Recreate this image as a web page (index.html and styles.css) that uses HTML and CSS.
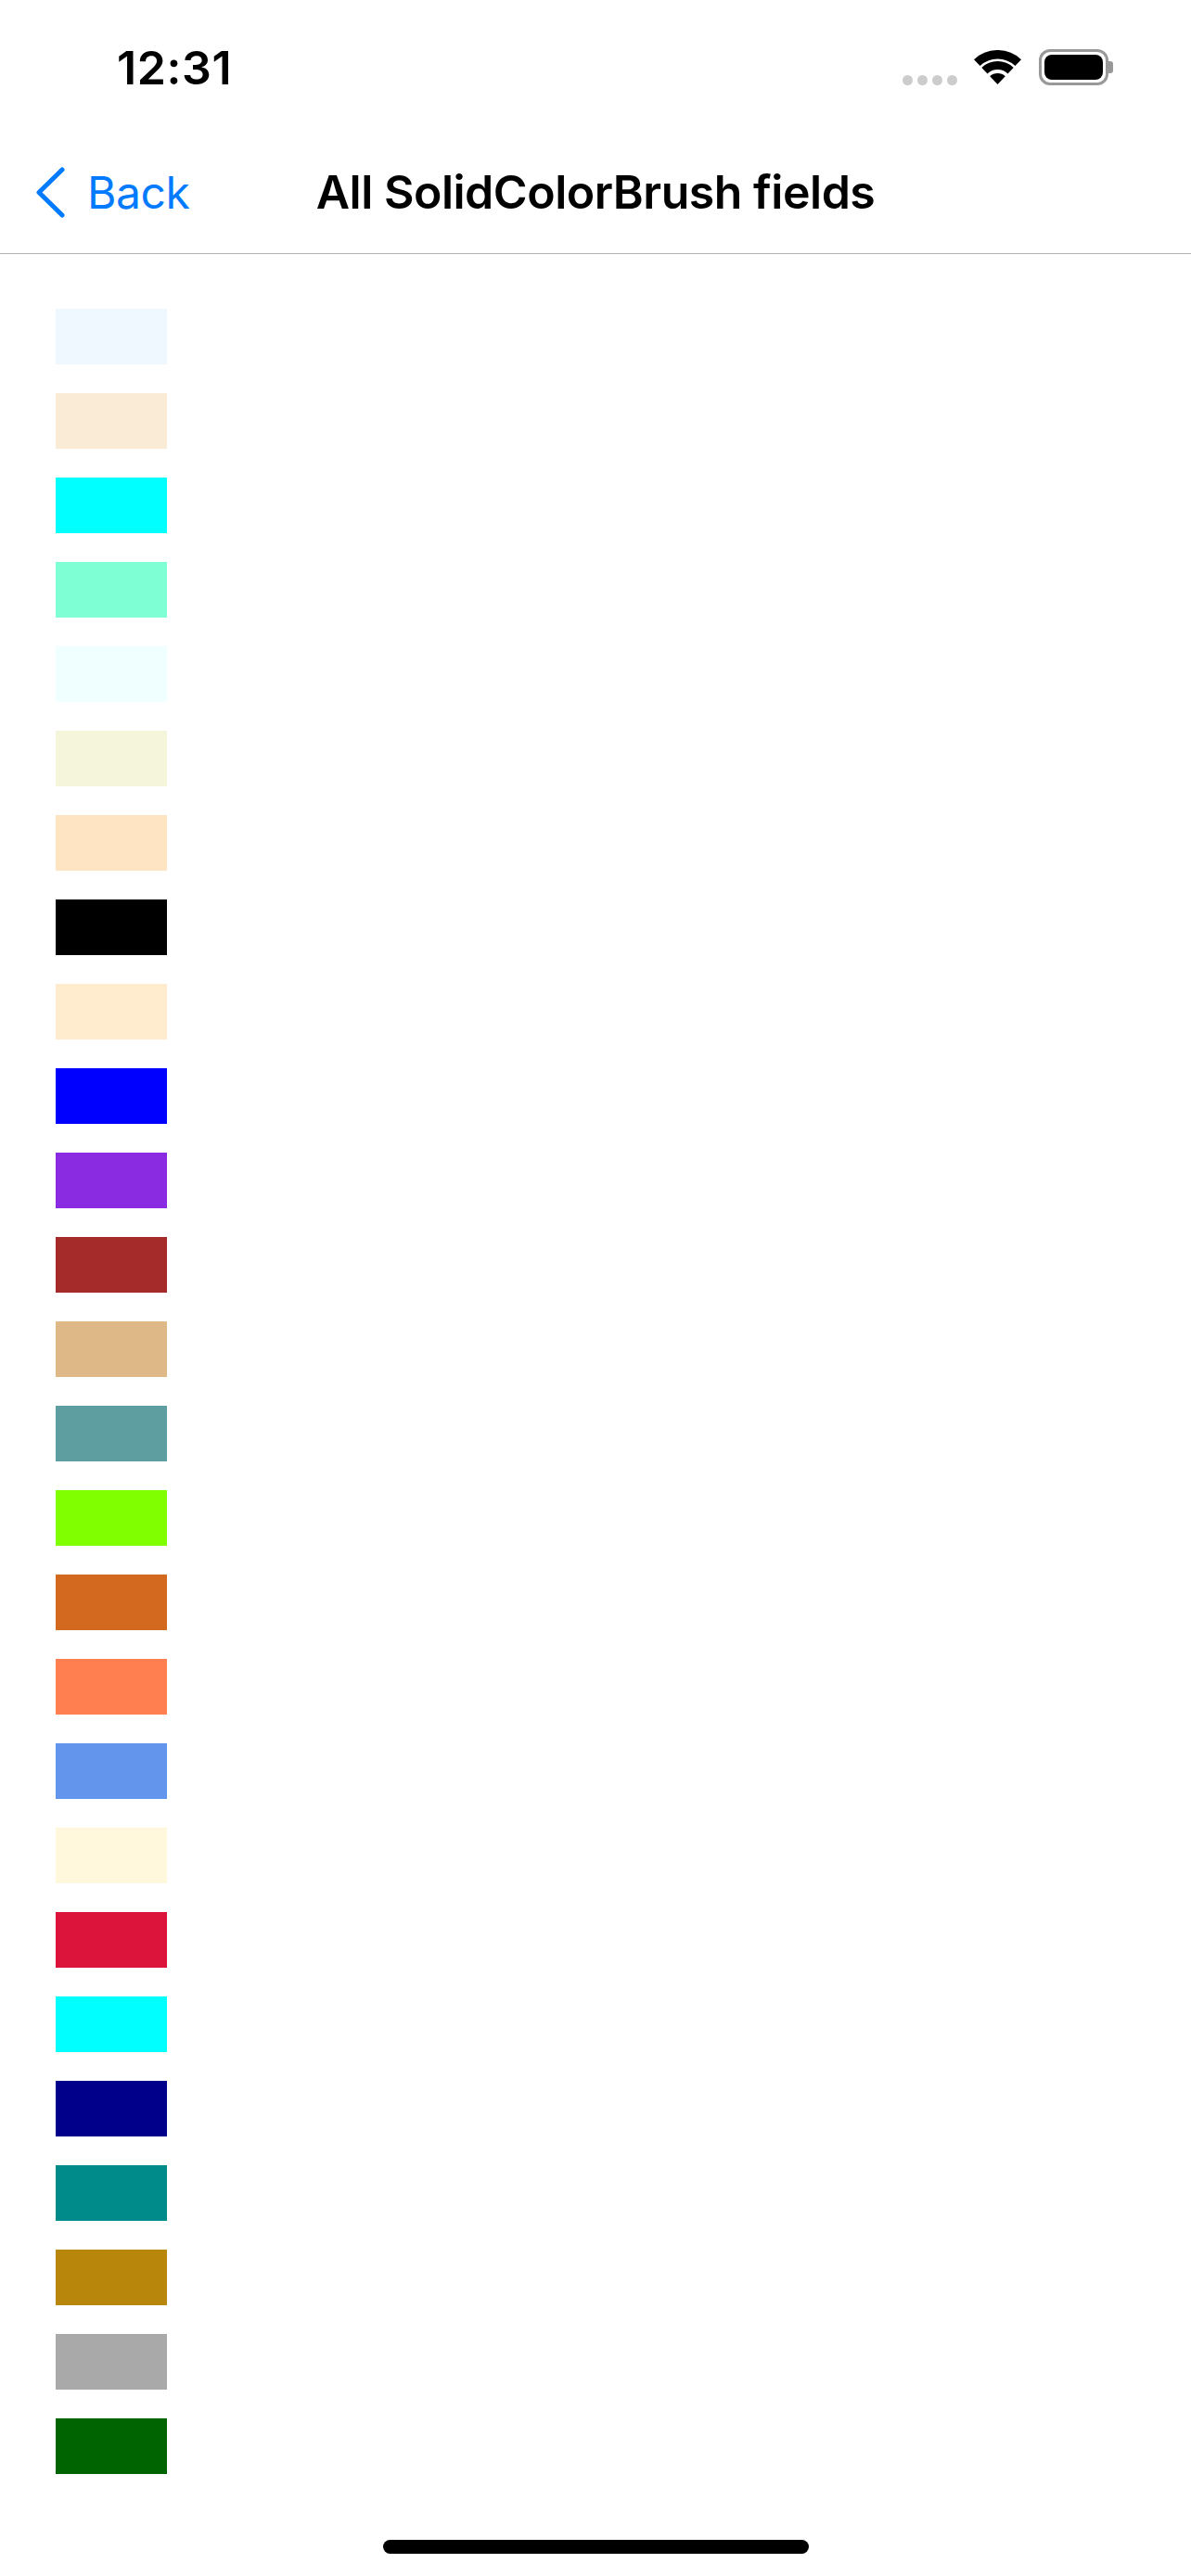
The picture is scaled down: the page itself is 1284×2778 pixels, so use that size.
FILE: index.html
```html
<!DOCTYPE html>
<html lang="en">
    <head>
        <meta charset="UTF-8">
        <title>All SolidColorBrush fields</title>
        <link rel="stylesheet" href="styles.css">
    </head>
    <body>
        <div class="page">
            <header class="status-bar">
                <span class="time">12:31</span>
                <div class="status-icons">
                    <div class="signal">
                        <span class="dot"></span>
                        <span class="dot"></span>
                        <span class="dot"></span>
                        <span class="dot"></span>
                    </div>
                    <svg class="wifi" width="51" height="37" viewBox="0 0 51 37">
                        <path d="M3.3 13.6A32.25 32.25 0 0 1 47.7 13.6" fill="none" stroke="#000" stroke-width="9.5"/>
                        <path d="M11.4 22.2A20.5 20.5 0 0 1 39.6 22.2" fill="none" stroke="#000" stroke-width="9"/>
                        <path d="M25.5 37L17.2 28.3A12 12 0 0 1 33.8 28.3Z" fill="#000"/>
                    </svg>
                    <div class="battery">
                        <div class="battery-body">
                            <div class="battery-fill"></div>
                        </div>
                        <div class="battery-nub"></div>
                    </div>
                </div>
            </header>
            <nav class="nav-bar">
                <a class="back">
                    <svg class="chevron" width="31" height="55" viewBox="0 0 31 55">
                        <path d="M28 3L3 27.5L28 52" fill="none" stroke="#007aff" stroke-width="5" stroke-linecap="round" stroke-linejoin="round"/>
                    </svg>
                    <span>Back</span>
                </a>
                <h1 class="title">All SolidColorBrush fields</h1>
            </nav>
            <main class="swatches">
                <div class="swatch alice-blue"></div>
                <div class="swatch antique-white"></div>
                <div class="swatch aqua"></div>
                <div class="swatch aquamarine"></div>
                <div class="swatch azure"></div>
                <div class="swatch beige"></div>
                <div class="swatch bisque"></div>
                <div class="swatch black"></div>
                <div class="swatch blanched-almond"></div>
                <div class="swatch blue"></div>
                <div class="swatch blue-violet"></div>
                <div class="swatch brown"></div>
                <div class="swatch burly-wood"></div>
                <div class="swatch cadet-blue"></div>
                <div class="swatch chartreuse"></div>
                <div class="swatch chocolate"></div>
                <div class="swatch coral"></div>
                <div class="swatch cornflower-blue"></div>
                <div class="swatch cornsilk"></div>
                <div class="swatch crimson"></div>
                <div class="swatch cyan"></div>
                <div class="swatch dark-blue"></div>
                <div class="swatch dark-cyan"></div>
                <div class="swatch dark-goldenrod"></div>
                <div class="swatch dark-gray"></div>
                <div class="swatch dark-green"></div>
            </main>
            <div class="home-indicator"></div>
        </div>
    </body>
</html>
```

FILE: styles.css
```css
* {
    box-sizing: border-box;
}
body {
    margin: 0;
    background-color: #fff;
    font-family: Inter, "Liberation Sans", sans-serif;
}
.page {
    display: flex;
    flex-direction: column;
    height: 2778px;
    overflow: hidden;
}
.status-bar {
    display: flex;
    justify-content: space-between;
    align-items: flex-start;
    height: 141px;
    padding: 53px 84px 0 126px;
}
.time {
    font-size: 50px;
    font-weight: 600;
    line-height: 40px;
    letter-spacing: 0.6px;
    color: #000;
}
.status-icons {
    display: flex;
    align-items: flex-start;
}
.signal {
    display: flex;
    gap: 5px;
    margin-top: 28px;
    margin-right: 18px;
}
.dot {
    width: 11px;
    height: 11px;
    border-radius: 50%;
    background-color: #ccc;
}
.wifi {
    display: block;
    margin-top: 1px;
    margin-right: 19px;
}
.battery {
    display: flex;
    align-items: center;
}
.battery-body {
    width: 75px;
    height: 39px;
    padding: 3px;
    border: 3px solid #999;
    border-radius: 12px;
}
.battery-fill {
    height: 100%;
    border-radius: 8px;
    background-color: #000;
}
.battery-nub {
    width: 5px;
    height: 13px;
    border-radius: 0 3px 3px 0;
    background-color: #999;
}
.nav-bar {
    display: grid;
    grid-template-columns: 1fr auto 1fr;
    align-items: center;
    height: 133px;
    padding: 0 39px;
    border-bottom: 1px solid #b2b2b2;
}
.back {
    display: flex;
    align-items: center;
    gap: 24px;
    font-size: 48px;
    letter-spacing: -0.4px;
    color: #007aff;
}
.chevron {
    display: block;
}
.title {
    grid-column: 2;
    margin: 0;
    font-size: 50px;
    font-weight: 600;
    letter-spacing: -0.48px;
    color: #000;
}
.swatches {
    display: flex;
    flex-direction: column;
    flex: 1;
    gap: 31px;
    padding: 59px 0 0 60px;
}
.swatch {
    width: 120px;
    height: 60px;
}
.home-indicator {
    width: 459px;
    height: 15px;
    margin: 0 auto 24px;
    border-radius: 8px;
    background-color: #000;
}
.alice-blue { background-color: #f0f8ff; }
.antique-white { background-color: #faebd7; }
.aqua { background-color: #0ff; }
.aquamarine { background-color: #7fffd4; }
.azure { background-color: #f0ffff; }
.beige { background-color: #f5f5dc; }
.bisque { background-color: #ffe4c4; }
.black { background-color: #000; }
.blanched-almond { background-color: #ffebcd; }
.blue { background-color: #00f; }
.blue-violet { background-color: #8a2be2; }
.brown { background-color: #a52a2a; }
.burly-wood { background-color: #deb887; }
.cadet-blue { background-color: #5f9ea0; }
.chartreuse { background-color: #7fff00; }
.chocolate { background-color: #d2691e; }
.coral { background-color: #ff7f50; }
.cornflower-blue { background-color: #6495ed; }
.cornsilk { background-color: #fff8dc; }
.crimson { background-color: #dc143c; }
.cyan { background-color: #0ff; }
.dark-blue { background-color: #00008b; }
.dark-cyan { background-color: #008b8b; }
.dark-goldenrod { background-color: #b8860b; }
.dark-gray { background-color: #a9a9a9; }
.dark-green { background-color: #006400; }
```
